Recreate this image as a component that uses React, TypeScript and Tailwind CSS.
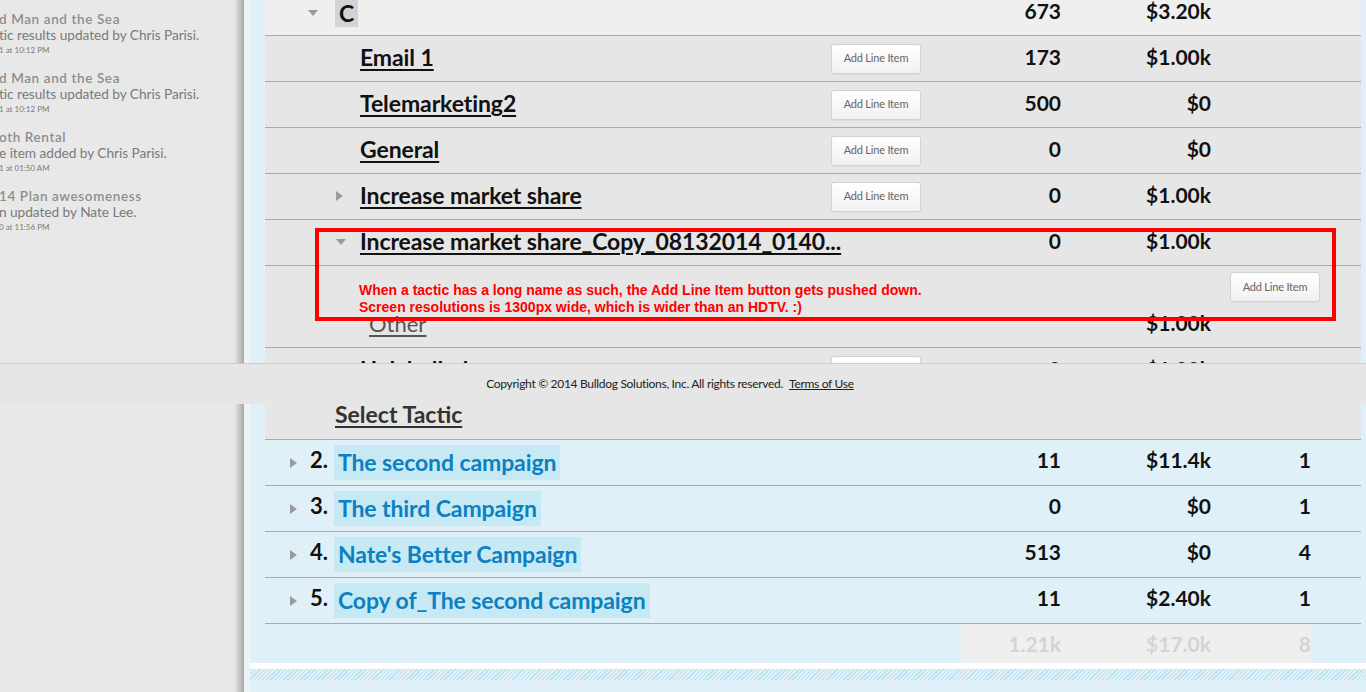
import React from "react";

const COLS = "grid grid-cols-[566px_90px_140px_150px_100px_1fr] items-center";

const CaretRight = () => (
  <svg width="7" height="10" viewBox="0 0 7 10">
    <polygon points="0,0 7,5 0,10" fill="#9a9a9a" />
  </svg>
);

const CaretDown = () => (
  <svg width="10" height="6" viewBox="0 0 10 6">
    <polygon points="0,0 10,0 5,6" fill="#9a9a9a" />
  </svg>
);

const AddButton = () => (
  <button
    type="button"
    className="w-[90px] h-[30px] rounded-[3px] border border-[#d2d2d2] bg-gradient-to-b from-white to-[#f1f1f1] text-[11px] text-[#666] font-['Lato'] tracking-[-0.2px] shadow-[0_1px_0_rgba(0,0,0,0.04)]"
  >
    Add Line Item
  </button>
);

const feed = [
  { title: "d Man and the Sea", body: "tic results updated by Chris Parisi.", time: "1 at 10:12 PM" },
  { title: "d Man and the Sea", body: "tic results updated by Chris Parisi.", time: "1 at 10:12 PM" },
  { title: "oth Rental", body: "e item added by Chris Parisi.", time: "1 at 01:50 AM" },
  { title: "14 Plan awesomeness", body: "n updated by Nate Lee.", time: "0 at 11:56 PM" },
];

const tactics = [
  { name: "Email 1", v1: "173", v2: "$1.00k", caret: null },
  { name: "Telemarketing2", v1: "500", v2: "$0", caret: null },
  { name: "General", v1: "0", v2: "$0", caret: null },
  { name: "Increase market share", v1: "0", v2: "$1.00k", caret: "right" },
];

const campaigns = [
  { n: "2.", name: "The second campaign", v1: "11", v2: "$11.4k", v3: "1" },
  { n: "3.", name: "The third Campaign", v1: "0", v2: "$0", v3: "1" },
  { n: "4.", name: "Nate's Better Campaign", v1: "513", v2: "$0", v3: "4" },
  { n: "5.", name: "Copy of_The second campaign", v1: "11", v2: "$2.40k", v3: "1" },
];

const Num = ({ children, className = "" }: { children?: React.ReactNode; className?: string }) => (
  <div className={`text-right text-[21px] font-bold text-[#111] ${className}`}>{children}</div>
);

function TacticRow({ name, v1, v2, caret, button = true }: { name: string; v1: string; v2: string; caret: string | null; button?: boolean }) {
  return (
    <div className={`${COLS} h-[46px] border-b border-[#aaa] pb-[3px]`}>
      <div className="flex items-center pl-[71px] min-w-0">
        <span className="w-[24px] shrink-0 flex items-center pt-[2px]">
          {caret === "right" && <CaretRight />}
          {caret === "down" && <CaretDown />}
        </span>
        <a className="shrink-0 text-[23px] font-bold text-[#111] underline underline-offset-[3px] decoration-[1.5px] whitespace-nowrap tracking-[-0.1px]">{name}</a>
      </div>
      <div className="pt-[3px]">{button && <AddButton />}</div>
      <Num>{v1}</Num>
      <Num>{v2}</Num>
      <div />
    </div>
  );
}

export default function App() {
  return (
    <div className="relative h-[692px] w-full overflow-hidden flex bg-[#dff0f8] font-['Lato',sans-serif]">
      {/* Activity feed */}
      <aside className="w-[244px] shrink-0 bg-gradient-to-r from-[#e8e8e8] from-[96%] to-[#a8a8a8] pt-[12px] overflow-hidden">
        {feed.map((f, i) => (
          <div key={i} className="mb-[13px] -ml-[1px] whitespace-nowrap">
            <div className="text-[13.5px] leading-[15px] font-semibold tracking-[0.6px] text-[#8e8e8e]">{f.title}</div>
            <div className="text-[13.7px] leading-[15px] text-[#7a7a7a] tracking-[-0.05px]">{f.body}</div>
            <div className="text-[8px] leading-[16px] text-[#7a7a7a]">{f.time}</div>
          </div>
        ))}
      </aside>
      <div className="w-[6px] shrink-0 bg-[#eef3f6]" />

      {/* Plan table */}
      <main className="flex-1 flex flex-col">
        <div className="pl-[15px] pr-[5px]">
          <div className="bg-[#e6e6e6] -mt-[10px]">
            <div className={`${COLS} h-[46px] border-b border-[#aaa] bg-[#efefef] pb-[3px]`}>
              <div className="flex items-center pl-[43px] pt-[4px]">
                <span className="w-[27px] shrink-0 flex items-center"><CaretDown /></span>
                <span className="bg-[#d3d3d3] h-[28px] px-[4px] flex items-center text-[23px] font-bold text-[#111]">C</span>
              </div>
              <div />
              <Num>673</Num>
              <Num>$3.20k</Num>
              <div />
            </div>
            {tactics.map((t) => (
              <TacticRow key={t.name} {...t} />
            ))}
            <TacticRow name="Increase market share_Copy_08132014_0140..." v1="0" v2="$1.00k" caret="down" button={false} />
            <div className="h-[82px] border-b border-[#aaa] flex flex-col">
              <div className="flex justify-end pt-[6px] pr-[41px]">
                <AddButton />
              </div>
              <div className={`${COLS} mt-auto h-[36px] mb-[6px]`}>
                <div className="pl-[104px]">
                  <a className="text-[22px] text-[#555] underline underline-offset-[3px]">Other</a>
                </div>
                <div />
                <div />
                <Num>$1.00k</Num>
                <div />
              </div>
            </div>
            <TacticRow name="Unlabelled" v1="0" v2="$1.00k" caret={null} />
            <div className="h-[46px] border-b border-[#aaa] flex items-center pl-[70px] pb-[4px]">
              <a className="text-[23px] font-bold text-[#333] underline underline-offset-[3px]">Select Tactic</a>
            </div>
          </div>

          {campaigns.map((c) => (
            <div key={c.n} className="grid grid-cols-[656px_140px_150px_100px_1fr] items-center h-[46px] border-b border-[#aaa]">
              <div className="flex items-center pl-[25px]">
                <span className="w-[20px] shrink-0 flex items-center"><CaretRight /></span>
                <span className="w-[24px] shrink-0 text-[22px] font-bold text-[#111] -mt-[7px]">{c.n}</span>
                <span className="bg-[#c6e9f3] h-[35px] px-[4px] flex items-center text-[23px] font-bold text-[#0b80c2] whitespace-nowrap tracking-[-0.1px]">{c.name}</span>
              </div>
              <Num className="-mt-[5px]">{c.v1}</Num>
              <Num className="-mt-[5px]">{c.v2}</Num>
              <Num className="-mt-[5px]">{c.v3}</Num>
              <div />
            </div>
          ))}

          <div className="grid grid-cols-[696px_350px_1fr] h-[39px]">
            <div />
            <div className="bg-[#efefef] grid grid-cols-[100px_150px_100px] items-center">
              <Num className="!text-[#d4d4d4]">1.21k</Num>
              <Num className="!text-[#d4d4d4]">$17.0k</Num>
              <Num className="!text-[#d4d4d4]">8</Num>
            </div>
            <div />
          </div>
        </div>
        <div className="h-[6px] bg-white" />
        <div className="h-[11px] bg-[image:repeating-linear-gradient(-45deg,#b8e1ef_0px,#b8e1ef_1px,#dff0f8_1px,#dff0f8_3px)]" />
      </main>

      {/* Sticky footer */}
      <footer className="absolute left-0 right-0 top-[363px] h-[41px] bg-[#e6e6e6] border-t border-[#cdcdcd] flex items-center justify-center pr-[26px] text-[12px] text-[#222] tracking-[-0.3px]">
        Copyright © 2014 Bulldog Solutions, Inc. All rights reserved.
        <a className="ml-[6px] underline">Terms of Use</a>
      </footer>

      {/* Annotation */}
      <div className="absolute left-[315px] top-[228px] w-[1021px] h-[93px] border-[4px] border-[#ff0000] pl-[40px] pt-[50px] font-['Liberation_Sans',Arial,sans-serif] text-[14px] leading-[17px] font-bold text-[#ff0000]">
        <div>When a tactic has a long name as such, the Add Line Item button gets pushed down.</div>
        <div>Screen resolutions is 1300px wide, which is wider than an HDTV. :)</div>
      </div>
    </div>
  );
}
